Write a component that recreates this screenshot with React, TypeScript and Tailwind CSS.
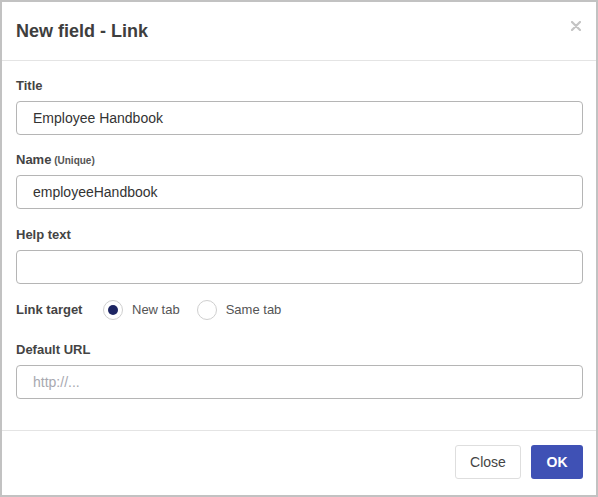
import React from "react";

function Field({ label, small, value, placeholder }: { label: string; small?: string; value?: string; placeholder?: string }) {
  return (
    <div className="flex flex-col">
      <div className="h-[16px] text-[13px] leading-[18px] font-bold text-[#444]">
        {label}
        {small && <span className="text-[10px] font-bold text-[#555]"> {small}</span>}
      </div>
      <div className="mt-[8px] h-[34px] rounded-[4px] border border-[#b5b5b5] flex items-center pl-[16px] text-[14px] text-[#333]">
        {value ? value : <span className="text-[#a8a8b0]">{placeholder}</span>}
      </div>
    </div>
  );
}

function Radio({ checked, label }: { checked?: boolean; label: string }) {
  return (
    <div className="flex items-center">
      <div className="w-[20px] h-[20px] rounded-full border border-[#cfcfcf] flex items-center justify-center">
        {checked && <div className="w-[10px] h-[10px] rounded-full bg-[#1d2563]" />}
      </div>
      <span className="ml-[9px] text-[13px] text-[#555]">{label}</span>
    </div>
  );
}

export default function App() {
  return (
    <div className="w-[598px] h-[497px] bg-white border-2 border-[#c2c2c2] flex flex-col" style={{ fontFamily: '"Liberation Sans", Arial, sans-serif' }}>
      <div className="h-[59px] shrink-0 border-b border-[#e4e4e4] flex items-center justify-between pl-[14px] pr-[15px]">
        <div className="text-[18px] font-bold text-[#3e3e3e] pt-[1px]">New field - Link</div>
        <svg width="10" height="10" viewBox="0 0 10 10" className="mb-[10px]">
          <path d="M1 1 L9 9 M9 1 L1 9" stroke="#c4c4c4" strokeWidth="2.2" strokeLinecap="round" />
        </svg>
      </div>
      <div className="flex-1 flex flex-col px-[14px] pt-[16px] pr-[13px]">
        <Field label="Title" value="Employee Handbook" />
        <div className="mt-[16px]">
          <Field label="Name" small="(Unique)" value="employeeHandbook" />
        </div>
        <div className="mt-[17px]">
          <Field label="Help text" value="" placeholder="" />
        </div>
        <div className="mt-[16px] h-[20px] flex items-center">
          <div className="w-[87px] text-[13px] font-bold text-[#444]">Link target</div>
          <Radio checked label="New tab" />
          <div className="ml-[17px]">
            <Radio label="Same tab" />
          </div>
        </div>
        <div className="mt-[21px]">
          <Field label="Default URL" placeholder="http://..." />
        </div>
      </div>
      <div className="h-[65px] shrink-0 border-t border-[#e4e4e4] flex items-start justify-end pt-[14px] pr-[13px] gap-[10px]">
        <button className="w-[66px] h-[34px] rounded-[3px] border border-[#dedede] bg-white text-[14px] text-[#444]">Close</button>
        <button className="w-[52px] h-[34px] rounded-[3px] bg-[#3f51b5] text-[14px] font-bold text-white">OK</button>
      </div>
    </div>
  );
}
